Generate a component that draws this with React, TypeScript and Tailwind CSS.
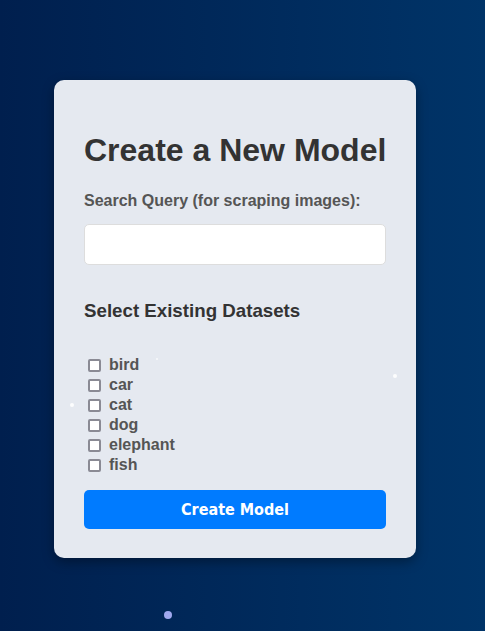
import React from "react";

const datasets = ["bird", "car", "cat", "dog", "elephant", "fish"];

// little floating dots over the background
const dots = [
  { cls: "left-[393px] top-[374px] w-[4px] h-[4px] bg-white/90" },
  { cls: "left-[70px] top-[403px] w-[4px] h-[4px] bg-white/90" },
  { cls: "left-[156px] top-[358px] w-[2px] h-[2px] bg-white/70" },
  { cls: "left-[164px] top-[611px] w-[8px] h-[8px] bg-[#9fa8ee]" },
];

export default function App() {
  return (
    <div
      className="relative w-full min-h-[631px] bg-gradient-to-r from-[#001f4e] to-[#003468] pt-[80px] overflow-hidden"
      style={{ fontFamily: '"Liberation Sans", Arial, sans-serif' }}
    >
      <div className="ml-[54px] w-[362px] rounded-[10px] bg-[#e5e9f0] px-[30px] pt-[52px] pb-[29px] shadow-[0_4px_12px_rgba(0,0,0,0.35)]">
        <h1 className="whitespace-nowrap text-[32px] font-bold leading-[37px] text-[#333333]">
          Create a New Model
        </h1>

        <label className="block mt-[23px] text-[16px] font-bold leading-[18px] text-[#555555]">
          Search Query (for scraping images):
        </label>
        <input
          type="text"
          className="mt-[14px] block w-[302px] h-[41px] rounded-[5px] bg-white border border-[#dddddd] outline-none px-2"
        />

        <h2 className="mt-[35px] text-[18.72px] font-bold leading-[21px] text-[#333333]">
          Select Existing Datasets
        </h2>

        <div className="mt-[34px] flex flex-col">
          {datasets.map((d) => (
            <label
              key={d}
              className="flex items-center h-[20px] text-[16px] font-bold text-[#555555]"
            >
              <span className="ml-[4px] mr-[8px] w-[13px] h-[13px] rounded-[2px] border-[2px] border-[#8a8a94] bg-white" />
              {d}
            </label>
          ))}
        </div>

        <button
          className="mt-[15px] w-[302px] h-[39px] rounded-[5px] bg-[#007bff] text-white text-[16px] font-bold"
          style={{ fontFamily: '"DejaVu Sans Condensed", "DejaVu Sans", sans-serif' }}
        >
          Create Model
        </button>
      </div>

      {dots.map((d, i) => (
        <span key={i} className={`absolute rounded-full ${d.cls}`} />
      ))}
    </div>
  );
}
